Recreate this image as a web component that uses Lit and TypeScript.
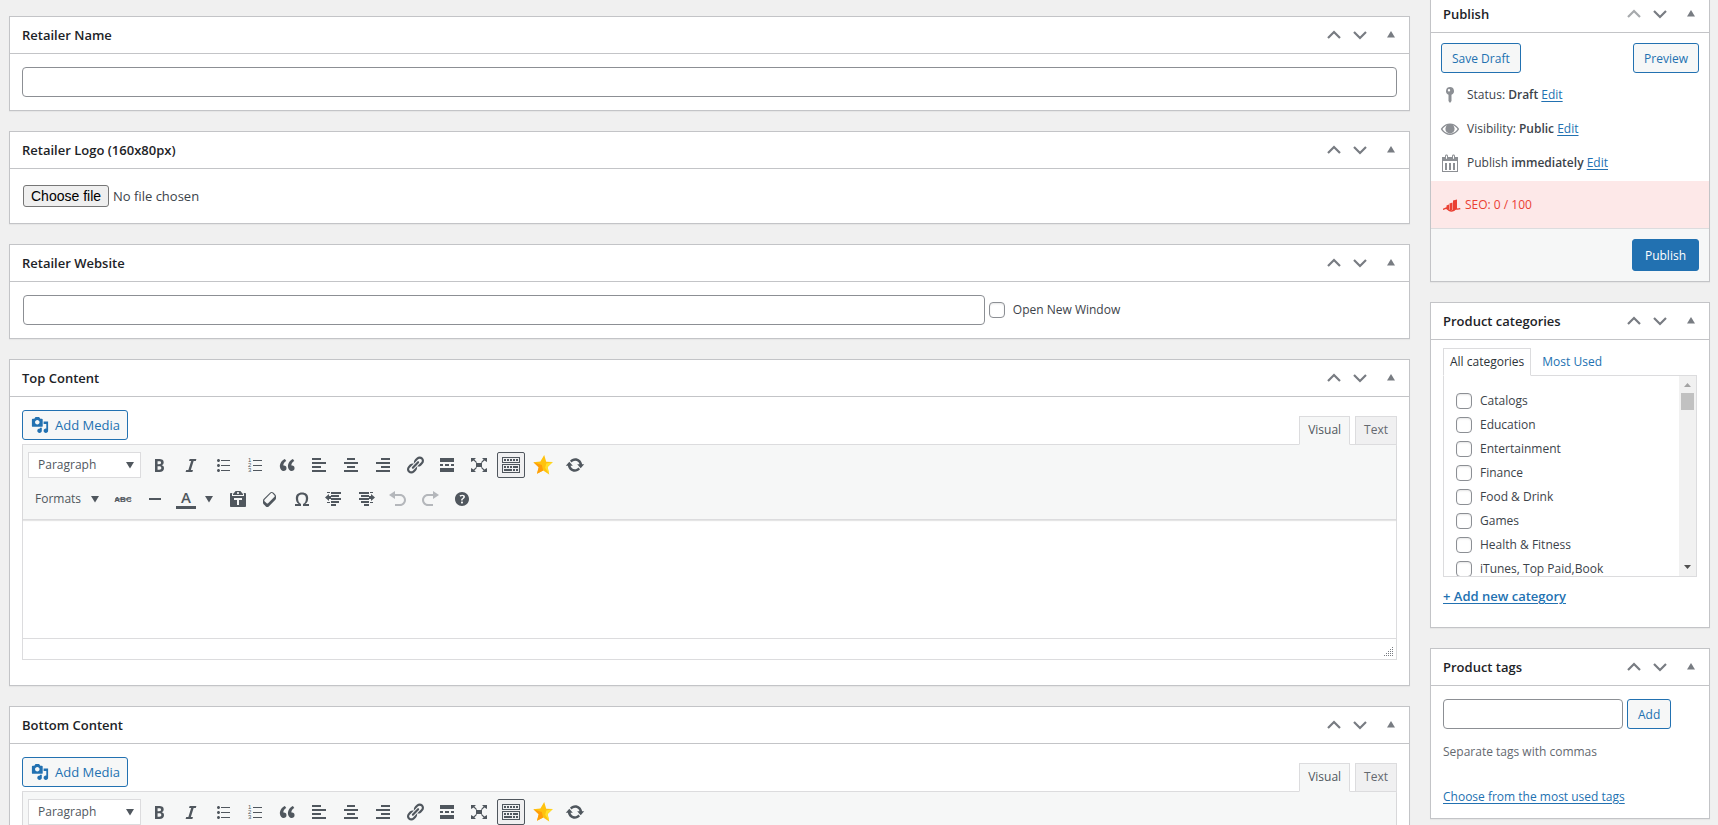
import { LitElement, html, css, svg } from "lit";
import { customElement, property } from "lit/decorators.js";
import { classMap } from "lit/directives/class-map.js";

const ICONS: Record<string, unknown> = {
  bold: svg`<path d="M6 4v13h4.54c1.37 0 2.46-.33 3.26-1 .8-.66 1.2-1.58 1.2-2.77 0-.84-.17-1.51-.51-2.01s-.9-.85-1.67-1.03v-.09c.57-.1 1.02-.4 1.36-.9s.51-1.13.51-1.91c0-1.14-.39-1.98-1.17-2.5C12.75 4.26 11.5 4 9.78 4H6zm2.57 5.15V6.26h1.36c.73 0 1.27.11 1.61.32.34.22.51.58.51 1.07 0 .54-.16.92-.47 1.15s-.82.35-1.51.35h-1.5zm0 2.19h1.6c1.44 0 2.16.53 2.16 1.61 0 .6-.17 1.05-.51 1.34s-.86.43-1.57.43H8.57v-3.38z"/>`,
  italic: svg`<path d="M14.78 6h-2.13l-2.8 9h2.12l-.62 2H4.6l.62-2h2.14l2.8-9H8.03l.62-2h6.75z"/>`,
  ul: svg`<path d="M5.5 7C4.67 7 4 6.33 4 5.5 4 4.68 4.67 4 5.5 4 6.32 4 7 4.68 7 5.5 7 6.33 6.32 7 5.5 7zM8 5h9v1H8V5zm-2.5 7c-.83 0-1.5-.67-1.5-1.5C4 9.68 4.67 9 5.5 9c.82 0 1.5.68 1.5 1.5 0 .83-.68 1.5-1.5 1.5zM8 10h9v1H8v-1zm-2.5 7c-.83 0-1.5-.67-1.5-1.5 0-.82.67-1.5 1.5-1.5.82 0 1.5.68 1.5 1.5 0 .83-.68 1.5-1.5 1.5zM8 15h9v1H8v-1z"/>`,
  ol: svg`<path d="M8 5h9v1H8zM8 10h9v1H8zM8 15h9v1H8z"/><g font-family="Liberation Sans, sans-serif" font-size="6"><text x="3" y="7">1</text><text x="3" y="12">2</text><text x="3" y="17">3</text></g>`,
  quote: svg`<path d="M9.49 13.22c0-.74-.2-1.38-.61-1.9-.62-.78-1.83-.88-2.53-.72-.29-1.65 1.11-3.75 2.92-4.65L7.88 4c-2.73 1.3-5.42 4.28-4.96 8.05C3.21 14.43 4.59 16 6.54 16c.85 0 1.56-.25 2.12-.75s.83-1.18.83-2.03zm8.05 0c0-.74-.2-1.38-.61-1.9-.63-.78-1.83-.88-2.53-.72-.29-1.65 1.11-3.75 2.92-4.65L15.93 4c-2.73 1.3-5.41 4.28-4.95 8.05.29 2.38 1.66 3.95 3.61 3.95.85 0 1.56-.25 2.12-.75s.83-1.18.83-2.03z"/>`,
  left: svg`<path d="M12 5V3H3v2h9zm5 4V7H3v2h14zm-5 4v-2H3v2h9zm5 4v-2H3v2h14z"/>`,
  center: svg`<path d="M14 5V3H6v2h8zm3 4V7H3v2h14zm-3 4v-2H6v2h8zm3 4v-2H3v2h14z"/>`,
  right: svg`<path d="M17 5V3H8v2h9zm0 4V7H3v2h14zm0 4v-2H8v2h9zm0 4v-2H3v2h14z"/>`,
  link: svg`<path d="M17.74 2.76c1.68 1.69 1.68 4.41 0 6.1l-1.53 1.52c-1.12 1.12-2.7 1.47-4.14 1.09l2.62-2.61.76-.77.76-.76c.84-.84.84-2.2 0-3.04-.84-.85-2.2-.85-3.04 0l-.77.76-3.38 3.38c-.37-1.44-.02-3.02 1.1-4.14l1.52-1.53c1.69-1.68 4.42-1.68 6.1 0zM8.59 13.43l5.34-5.34c.42-.42.42-1.1 0-1.52-.44-.43-1.13-.39-1.53 0l-5.33 5.34c-.42.42-.42 1.1 0 1.52.44.43 1.13.39 1.52 0zm-.76 2.29l4.14-4.15c.38 1.44.03 3.02-1.09 4.14l-1.52 1.53c-1.69 1.68-4.41 1.68-6.1 0-1.68-1.68-1.68-4.42 0-6.1l1.53-1.52c1.12-1.12 2.7-1.47 4.14-1.1l-4.14 4.15c-.85.84-.85 2.2 0 3.05.84.84 2.2.84 3.04 0z"/>`,
  more: svg`<path d="M17 7V3H3v4h14zM6 11V9H3v2h3zm6 0V9H8v2h4zm5 0V9h-3v2h3zm0 6v-4H3v4h14z"/>`,
  full: svg`<path d="M7 8h6v4H7zM2 3h5L5.4 4.6 8 7.2l-.8.8-2.6-2.6L2 7zM18 3v4l-2.6-1.6L12.8 8l-.8-.8 2.6-2.6L13 3zM2 17v-4l2.6 1.6L7.2 12l.8.8-2.6 2.6L7 17zM18 17h-5l1.6-1.6-2.6-2.6.8-.8 2.6 2.6L18 13z"/>`,
  sink: svg`<path d="M19 2v6H1V2h18zm-1 5V3H2v4h16zM5 4v2H3V4h2zm3 0v2H6V4h2zm3 0v2H9V4h2zm3 0v2h-2V4h2zm3 0v2h-2V4h2zm2 5v9H1V9h18zm-1 8v-7H2v7h16zM5 11v2H3v-2h2zm3 0v2H6v-2h2zm3 0v2H9v-2h2zm6 0v2h-5v-2h5zm-6 3v2H3v-2h8zm3 0v2h-2v-2h2zm3 0v2h-2v-2h2z"/>`,
  star: svg`<path fill="#ffc20e" d="M11.2 0l2 6.8 6.6.2-5.2 5 1.6 7.4-6-3.9L4 18.8l1.7-6.6L.4 7.2l7-.7z"/><path fill="#ff9d0a" d="M.4 7.2l8.4 2.9 1.4 5.4L4 18.8l1.7-6.6z"/><path fill="#ffdf2b" d="M19.8 7l-6.5 1.6-1.1 4.2 4 6.6L14.6 12z"/>`,
  sync: svg`<path d="M10.2 3.28c3.53 0 6.43 2.61 6.92 6h2.08l-3.5 4-3.5-4h2.32c-.45-1.97-2.21-3.45-4.32-3.45-1.45 0-2.73.71-3.54 1.78L4.95 5.66C6.23 4.2 8.11 3.28 10.2 3.28zm-.4 13.44c-3.52 0-6.43-2.61-6.92-6H.8l3.5-4c1.17 1.33 2.33 2.67 3.5 4H5.48c.45 1.97 2.21 3.45 4.32 3.45 1.45 0 2.73-.71 3.54-1.78l1.71 1.95c-1.28 1.46-3.15 2.38-5.25 2.38z"/>`,
  strike: svg`<text x="10" y="13" text-anchor="middle" font-family="Liberation Sans, sans-serif" font-size="8" font-weight="700">ABC</text><path d="M2 9.5h16v1H2z"/>`,
  hr: svg`<path d="M4 9h12v2H4z"/>`,
  color: svg`<text x="10" y="14" text-anchor="middle" font-family="Open Sans, sans-serif" font-size="15" font-weight="600">A</text><path d="M0 17h20v3H0z"/>`,
  paste: svg`<path d="M12.38 2L15 5v1H5V5l2.64-3h4.74zM10 5c.55 0 1-.44 1-1 0-.55-.45-1-1-1s-1 .45-1 1c0 .56.45 1 1 1zm5.45-1H17c.55 0 1 .45 1 1v12c0 .56-.45 1-1 1H3c-.55 0-1-.44-1-1V5c0-.55.45-1 1-1h1.55L4 4.63V7h12V4.63zM14 11V9H6v2h3v5h2v-5h3z"/>`,
  eraser: svg`<path d="M14.29 4.59l1.1 1.11c.41.4.61.94.61 1.47v2.12c0 .53-.2 1.07-.61 1.47l-6.63 6.63c-.4.41-.94.61-1.47.61s-1.07-.2-1.47-.61l-1.11-1.1-1.1-1.11c-.41-.4-.61-.94-.61-1.47v-2.12c0-.54.2-1.07.61-1.48l6.63-6.62c.4-.41.94-.61 1.47-.61s1.06.2 1.47.61zm-6.21 9.7l6.42-6.42c.39-.39.39-1.03 0-1.43L12.36 4.3c-.19-.19-.45-.29-.72-.29s-.52.1-.71.29l-6.42 6.42c-.39.4-.39 1.04 0 1.43l2.14 2.14c.38.38 1.04.38 1.43 0z"/>`,
  omega: svg`<path d="M10 5.4c1.27 0 2.24.36 2.91 1.08.66.71 1 1.76 1 3.13 0 1.28-.23 2.37-.69 3.27-.47.89-1.27 1.52-2.22 2.12v2h6v-2h-3.69c.92-.64 1.62-1.34 2.12-2.34.49-1.01.74-2.13.74-3.35 0-1.78-.55-3.19-1.65-4.22S11.92 3.54 10 3.54s-3.43.53-4.52 1.57c-1.1 1.04-1.65 2.44-1.65 4.2 0 1.21.24 2.31.73 3.33.48 1.01 1.19 1.71 2.1 2.36H3v2h6v-2c-.98-.64-1.8-1.28-2.24-2.17-.45-.89-.67-1.96-.67-3.22 0-1.37.33-2.41 1-3.13C7.75 5.76 8.72 5.4 10 5.4z"/>`,
  outdent: svg`<path d="M3 3h3v1H3zM7 3h10v2H7zM7 6h8v2H7zM7 9h10v2H7zM7 12h8v2H7zM7 15h5v2H7zM3 13h3v1H3zM5 5v2h2v3H5v2L1 8.500z"/>`,
  indent: svg`<path d="M14 3h3v1h-3zM3 3h10v2H3zM5 6h8v2H5zM3 9h10v2H3zM5 12h8v2H5zM8 15h5v2H8zM14 13h3v1h-3zM15 5v2h-2v3h2v2l4-3.500z"/>`,
  undo: svg`<path d="M12 5H7V2L1 6l6 4V7h5c2.2 0 4 1.8 4 4s-1.8 4-4 4H7v2h5c3.3 0 6-2.7 6-6s-2.7-6-6-6z"/>`,
  redo: svg`<path d="M8 5h5V2l6 4-6 4V7H8c-2.2 0-4 1.8-4 4s1.8 4 4 4h5v2H8c-3.3 0-6-2.7-6-6s2.7-6 6-6z"/>`,
  help: svg`<path d="M17 10c0-3.87-3.14-7-7-7-3.87 0-7 3.13-7 7s3.13 7 7 7c3.86 0 7-3.13 7-7zm-6.3 1.48H9.14v-.43c0-.38.08-.7.24-.98s.46-.57.88-.89c.41-.29.68-.53.81-.71.14-.18.2-.39.2-.62 0-.25-.09-.44-.28-.58-.19-.13-.45-.19-.79-.19-.58 0-1.25.19-2 .57l-.64-1.28c.87-.49 1.8-.74 2.77-.74.81 0 1.45.2 1.92.58.48.39.71.91.71 1.55 0 .43-.09.8-.29 1.11-.19.32-.57.67-1.11 1.06-.38.28-.61.49-.71.63-.1.15-.15.34-.15.57v.35zm-1.47 2.74c-.18-.17-.27-.42-.27-.73 0-.33.08-.58.26-.75s.43-.25.77-.25c.32 0 .57.09.75.26s.27.42.27.74c0 .3-.09.55-.27.72-.18.18-.43.27-.75.27-.33 0-.58-.09-.76-.26z"/>`,
  media: svg`<path d="M13 11V4c0-.55-.45-1-1-1h-1.67L9 1H5L3.67 3H2c-.55 0-1 .45-1 1v7c0 .55.45 1 1 1h10c.55 0 1-.45 1-1zM7 4.5c1.38 0 2.5 1.12 2.5 2.5S8.38 9.5 7 9.5 4.5 8.38 4.5 7 5.62 4.5 7 4.5zM14 6h5v10.5c0 1.38-1.12 2.5-2.5 2.5S14 17.88 14 16.5s1.12-2.5 2.5-2.5c.17 0 .34.02.5.05V9h-3V6zm-4 8.05V13h2v3.5c0 1.38-1.12 2.5-2.5 2.5S7 17.88 7 16.5 8.12 14 9.5 14c.17 0 .34.02.5.05z"/>`,
  pin: svg`<path fill-rule="evenodd" d="M10 2a4 4 0 0 1 1.5 7.700V16L10 18l-1.500-2V9.700A4 4 0 0 1 10 2zM9 4a1.200 1.200 0 1 0 0 2.400A1.200 1.200 0 0 0 9 4z"/>`,
  eye: svg`<path fill-rule="evenodd" d="M19.2 10S16 4.500 10 4.500.8 10 .8 10 4 16 10 16s9.200-6 9.200-6zM10 14.700c-4 0-6.500-3-7.500-4.600.8-1.300 2.400-3 4.700-3.900A4.600 4.600 0 1 0 12.800 6.200c2.300.9 3.900 2.600 4.700 3.900-1 1.600-3.500 4.600-7.500 4.600z"/><path d="M10 5.500a4 4 0 1 0 0 8 4 4 0 0 0 0-8zM10 7v2.200H7.700A2.300 2.300 0 0 1 10 7z" fill-rule="evenodd"/>`,
  calendar: svg`<path fill-rule="evenodd" d="M15 4h3v15H2V4h3V3c0-.83.67-1.500 1.500-1.500S8 2.170 8 3v1h4V3c0-.83.67-1.500 1.500-1.500S15 2.170 15 3v1zM6 3v2.500c0 .28.22.5.5.5s.5-.22.5-.5V3c0-.28-.22-.5-.5-.5S6 2.720 6 3zm7 0v2.500c0 .28.22.5.5.5s.5-.22.5-.5V3c0-.28-.22-.5-.5-.5s-.5.22-.5.5zm4 15V8H3v10h14zM7 17V10H5v7zm4 0V10H9v7zm4 0V10h-2v7z"/>`,
  seo: svg`<path d="M3.500 10.500l2.500-1V14l-2.500.5zM6.500 8.500l3-1V15h-3zM10 5.500l4-1V14l-4 1.500z"/><path d="M0 14.200c1.500 0 2.400-1.400 4-1.200M4 13c1 2.400 3 3 4.800 3 2.200 0 3.200-1.200 4.600-2.800M13 13.600c1.500 1 2.500.6 4.300 0" fill="none" stroke="currentColor" stroke-width="1.400"/>`,
  up: svg`<path d="M4 13l6-6 6 6" fill="none" stroke="currentColor" stroke-width="2.200"/>`,
  down: svg`<path d="M4 7l6 6 6-6" fill="none" stroke="currentColor" stroke-width="2.200"/>`,
  toggle: svg`<path d="M6 12.500h8L10 6z"/>`,
  caret: svg`<path d="M6 7h8l-4 6.500z"/>`,
};

const icon = (name: string) =>
  html`<svg class="icon" viewBox="0 0 20 20" width="20" height="20" fill="currentColor" aria-hidden="true">${ICONS[name]}</svg>`;

const base = css`
  *, *::before, *::after { box-sizing: border-box; }
  button, input, select { font: inherit; color: inherit; margin: 0; }
  button { cursor: pointer; }
  .icon { display: block; flex: none; overflow: visible; }
  .button {
    display: inline-flex;
    align-items: center;
    justify-content: center;
    height: 30px;
    padding: 2px 10px 0;
    border: 1px solid #2271b1;
    border-radius: 3px;
    background: #f6f7f7;
    color: #2271b1;
    white-space: nowrap;
  }
  .field {
    display: block;
    height: 30px;
    padding: 0 8px;
    border: 1px solid #8c8f94;
    border-radius: 4px;
    background: #fff;
  }
`;

@customElement("meta-panel")
export class MetaPanel extends LitElement {
  @property() heading = "";
  @property({ type: Boolean }) first = false;

  static styles = [
    base,
    css`
      :host {
        display: block;
        border: 1px solid #c3c4c7;
        background: #fff;
        box-shadow: 0 1px 1px rgba(0, 0, 0, 0.04);
      }
      .head {
        display: flex;
        align-items: center;
        height: 37px;
        border-bottom: 1px solid #c3c4c7;
      }
      .title {
        flex: 1;
        margin: 0;
        padding: 0 12px;
        font-size: 13px;
        line-height: 20px;
        font-weight: 600;
        color: #1d2327;
      }
      .handle {
        display: flex;
        align-items: center;
        justify-content: center;
        width: 26px;
        height: 36px;
        padding: 0;
        border: 0;
        background: none;
        color: #787c82;
      }
      .handle.wide { width: 36px; }
      .handle:disabled { color: #a7aaad; }
    `,
  ];

  render() {
    return html`
      <div class="head">
        <h2 class="title">${this.heading}</h2>
        <button class="handle" aria-label="Move up" ?disabled=${this.first}>${icon("up")}</button>
        <button class="handle" aria-label="Move down">${icon("down")}</button>
        <button class="handle wide" aria-label="Toggle panel" aria-expanded="true">${icon("toggle")}</button>
      </div>
      <slot></slot>
    `;
  }
}

@customElement("rich-editor")
export class RichEditor extends LitElement {
  @property() name = "";

  static styles = [
    base,
    css`
      :host { display: block; padding: 13px 12px 25px; }
      .top { display: flex; justify-content: space-between; align-items: flex-start; height: 34px; }
      .media { gap: 6px; padding: 0 7px 0 8px; font-size: 13px; }
      .media .icon { width: 18px; height: 18px; }
      .tabs { display: flex; gap: 5px; align-self: flex-end; margin-bottom: -1px; }
      .tab {
        height: 29px;
        padding: 0 8px 2px;
        border: 1px solid #dcdcde;
        background: #f0f0f1;
        color: #646970;
      }
      .tab.on {
        position: relative;
        z-index: 1;
        border-bottom-color: #f6f7f7;
        background: #f6f7f7;
        color: #50575e;
      }
      .box { border: 1px solid #dcdcde; }
      .bar {
        position: relative;
        display: flex;
        flex-direction: column;
        gap: 8px;
        padding: 7px 3px;
        border-bottom: 1px solid #dcdcde;
        background: #f6f7f7;
        box-shadow: 0 1px 1px rgba(0, 0, 0, 0.1);
        color: #50575e;
      }
      .row { display: flex; align-items: center; height: 26px; }
      .tool {
        display: flex;
        align-items: center;
        justify-content: center;
        width: 28px;
        height: 26px;
        margin: 0 2px;
        padding: 0;
        border: 1px solid transparent;
        border-radius: 2px;
        background: none;
        color: #50575e;
      }
      .tool.pressed { border-color: #50575e; background: #f0f0f1; }
      .tool.split { justify-content: flex-end; width: 47px; gap: 3px; }
      .tool.formats { justify-content: flex-start; gap: 4px; width: 77px; padding-left: 6px; }
      .tool.faded { color: #b4b7bb; }
      .pick { display: grid; width: 113px; margin: 0 2px; border: 1px solid #dcdcde; background: #fff; }
      .select {
        grid-area: 1 / 1;
        width: 111px;
        height: 24px;
        padding: 0 9px;
        border: 0;
        background: none;
        appearance: none;
      }
      .pick .icon { grid-area: 1 / 1; justify-self: end; align-self: center; pointer-events: none; }
      .canvas {
        display: block;
        width: 100%;
        height: 118px;
        padding: 10px;
        border: 0;
        outline: 0;
        resize: none;
        font: inherit;
      }
      .status { display: flex; justify-content: flex-end; align-items: flex-end; height: 21px; padding: 3px; border-top: 1px solid #dcdcde; }
    `,
  ];

  private tool(name: string, label: string, state = "") {
    return html`<button class=${classMap({ tool: true, pressed: state === "pressed", faded: state === "faded" })} aria-label=${label}>${icon(name)}</button>`;
  }

  render() {
    const dots = [];
    for (let r = 0; r < 5; r++)
      for (let c = 4 - r; c < 5; c++) dots.push(svg`<path d="M${c * 2} ${r * 2}h1v1h-1z"/>`);
    return html`
      <div class="top">
        <button class="button media">${icon("media")}Add Media</button>
        <div class="tabs">
          <button class="tab on">Visual</button>
          <button class="tab">Text</button>
        </div>
      </div>
      <div class="box">
        <div class="bar">
          <div class="row">
            <div class="pick">
              <select class="select" aria-label="Block format"><option>Paragraph</option></select>
              ${icon("caret")}
            </div>
            ${this.tool("bold", "Bold")} ${this.tool("italic", "Italic")} ${this.tool("ul", "Bulleted list")}
            ${this.tool("ol", "Numbered list")} ${this.tool("quote", "Blockquote")} ${this.tool("left", "Align left")}
            ${this.tool("center", "Align center")} ${this.tool("right", "Align right")} ${this.tool("link", "Insert link")}
            ${this.tool("more", "Read more")} ${this.tool("full", "Fullscreen")}
            ${this.tool("sink", "Toolbar toggle", "pressed")} ${this.tool("star", "Favourites")} ${this.tool("sync", "Refresh")}
          </div>
          <div class="row">
            <button class="tool formats">Formats${icon("caret")}</button>
            ${this.tool("strike", "Strikethrough")} ${this.tool("hr", "Horizontal line")}
            <button class="tool split" aria-label="Text color">${icon("color")}${icon("caret")}</button>
            ${this.tool("paste", "Paste as text")} ${this.tool("eraser", "Clear formatting")} ${this.tool("omega", "Special character")}
            ${this.tool("outdent", "Decrease indent")} ${this.tool("indent", "Increase indent")}
            ${this.tool("undo", "Undo", "faded")} ${this.tool("redo", "Redo", "faded")} ${this.tool("help", "Help")}
          </div>
        </div>
        <textarea class="canvas" aria-label=${this.name}></textarea>
        <div class="status">
          <svg width="9" height="9" viewBox="0 0 9 9" fill="#787c82" shape-rendering="crispEdges" aria-hidden="true">${dots}</svg>
        </div>
      </div>
    `;
  }
}

const CATEGORIES = [
  "Catalogs", "Education", "Entertainment", "Finance",
  "Food & Drink", "Games", "Health & Fitness", "iTunes, Top Paid,Book",
];

const STATUS = [
  { icon: "pin", label: "Status:", value: "Draft" },
  { icon: "eye", label: "Visibility:", value: "Public" },
  { icon: "calendar", label: "Publish", value: "immediately" },
];

@customElement("app-root")
export class AppRoot extends LitElement {
  static styles = [
    base,
    css`
      :host {
        display: block;
        height: 100vh;
        overflow: hidden;
        background: #f0f0f0;
        color: #3c434a;
        font: 12px/18px "Open Sans", "Noto Sans", sans-serif;
      }
      a { color: #2271b1; text-underline-offset: 2px; }
      strong { font-weight: 600; }
      .page {
        display: grid;
        grid-template-columns: minmax(0, 1fr) 280px;
        align-items: start;
        gap: 20px;
        margin-top: -5px;
        padding: 0 8px 0 9px;
      }
      .main, .side { display: flex; flex-direction: column; gap: 20px; }
      .main { padding-top: 21px; }
      .body { padding: 13px 12px; }
      .wide { width: 100%; }
      .file { display: flex; align-items: center; gap: 4px; padding: 16px 13px; font-size: 13px; }
      .file-input { width: 1px; height: 1px; position: absolute; opacity: 0; }
      .file-button {
        height: 22px;
        padding: 0 7px;
        border: 1px solid #767676;
        border-radius: 3px;
        background: #efefef;
        color: #000;
        font: 14px/20px "Liberation Sans", Arial, sans-serif;
      }
      .site { display: flex; align-items: center; gap: 4px; padding: 13px 12px 13px 13px; }
      .site .field { width: 70%; }
      .check { display: flex; align-items: center; gap: 8px; }
      .box {
        width: 16px;
        height: 16px;
        border: 1px solid #8c8f94;
        border-radius: 4px;
        background: #fff;
        appearance: none;
        box-shadow: inset 0 1px 2px rgba(0, 0, 0, 0.1);
      }
      .actions { display: flex; justify-content: space-between; padding: 10px 10px 5px; }
      .states { padding-bottom: 1px; }
      .state { display: flex; align-items: center; gap: 7px; height: 34px; padding: 0 9px; }
      .state .icon { color: #8c8f94; }
      .seo {
        display: flex;
        align-items: center;
        gap: 2px;
        height: 47px;
        padding: 0 12px;
        background: #fde8e8;
        color: #ea4033;
        font-weight: 500;
      }
      .foot { display: flex; justify-content: flex-end; padding: 10px; border-top: 1px solid #dcdcde; background: #f6f7f7; }
      .primary { height: 32px; padding: 2px 12px 0; background: #2271b1; color: #fff; }
      .cats { padding: 8px 12px 21px; }
      .tabs { display: flex; gap: 4px; margin-bottom: -1px; }
      .tab { height: 28px; padding: 0 6px; border: 1px solid transparent; background: none; color: #2271b1; }
      .tab.on { position: relative; border-color: #dcdcde; border-bottom-color: #fff; background: #fff; color: #2c3338; }
      .list { display: flex; height: 202px; border: 1px solid #dcdcde; overflow: hidden; }
      .items { flex: 1; margin: 0; padding: 13px 12px 0; list-style: none; }
      .items .check { height: 24px; }
      .scroll { display: flex; flex-direction: column; align-items: center; width: 17px; background: #f1f1f1; color: #505050; }
      .scroll .icon:first-child { color: #a3a3a3; }
      .thumb { flex: none; width: 13px; height: 17px; background: #c1c1c1; }
      .track { flex: 1; }
      .add { margin: 0; padding-top: 9px; font-size: 13px; font-weight: 600; line-height: 20px; }
      .tags { padding: 13px 12px 12px; }
      .tag-row { display: flex; gap: 4px; }
      .tag-row .field { width: 180px; }
      .hint { margin: 0; padding: 14px 0 27px; color: #646970; }
    `,
  ];

  render() {
    return html`
      <div class="page">
        <main class="main">
          <meta-panel heading="Retailer Name">
            <div class="body"><input class="field wide" type="text" aria-label="Retailer Name" /></div>
          </meta-panel>
          <meta-panel heading="Retailer Logo (160x80px)">
            <div class="file">
              <input class="file-input" type="file" id="logo" />
              <label class="file-button" for="logo">Choose file</label>
              <span>No file chosen</span>
            </div>
          </meta-panel>
          <meta-panel heading="Retailer Website">
            <div class="site">
              <input class="field" type="text" aria-label="Retailer Website" />
              <label class="check"><input class="box" type="checkbox" />Open New Window</label>
            </div>
          </meta-panel>
          <meta-panel heading="Top Content"><rich-editor name="Top Content"></rich-editor></meta-panel>
          <meta-panel heading="Bottom Content"><rich-editor name="Bottom Content"></rich-editor></meta-panel>
        </main>
        <aside class="side">
          <meta-panel heading="Publish" first>
            <div class="actions">
              <button class="button">Save Draft</button>
              <button class="button">Preview</button>
            </div>
            <div class="states">
              ${STATUS.map(
                (s) => html`<div class="state">
                  ${icon(s.icon)}<span>${s.label} <strong>${s.value}</strong> <a href="#">Edit</a></span>
                </div>`,
              )}
            </div>
            <div class="seo">${icon("seo")}SEO: 0 / 100</div>
            <div class="foot"><button class="button primary">Publish</button></div>
          </meta-panel>
          <meta-panel heading="Product categories">
            <div class="cats">
              <div class="tabs">
                <button class="tab on">All categories</button>
                <button class="tab">Most Used</button>
              </div>
              <div class="list">
                <ul class="items">
                  ${CATEGORIES.map((c) => html`<li><label class="check"><input class="box" type="checkbox" />${c}</label></li>`)}
                </ul>
                <div class="scroll" aria-hidden="true">
                  <svg class="icon" width="17" height="17" fill="currentColor"><path d="M5 11h7L8.500 7z" /></svg>
                  <span class="thumb"></span>
                  <span class="track"></span>
                  <svg class="icon" width="17" height="17" fill="currentColor"><path d="M5 6h7l-3.500 4z" /></svg>
                </div>
              </div>
              <p class="add"><a href="#">+ Add new category</a></p>
            </div>
          </meta-panel>
          <meta-panel heading="Product tags">
            <div class="tags">
              <div class="tag-row">
                <input class="field" type="text" aria-label="Add new tag" aria-describedby="hint" />
                <button class="button">Add</button>
              </div>
              <p class="hint" id="hint">Separate tags with commas</p>
              <a href="#">Choose from the most used tags</a>
            </div>
          </meta-panel>
        </aside>
      </div>
    `;
  }
}
